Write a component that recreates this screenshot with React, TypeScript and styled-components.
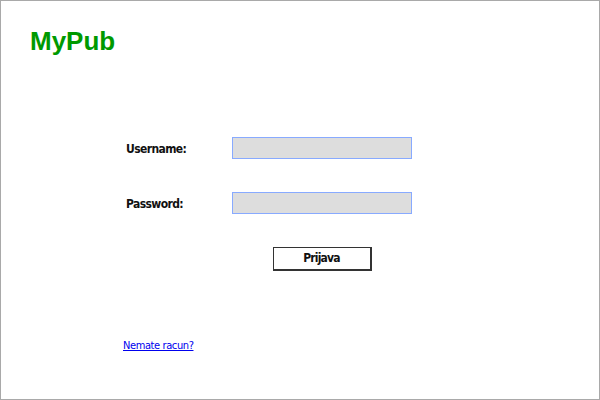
import React from "react";
import styled, { createGlobalStyle } from "styled-components";

const GlobalStyle = createGlobalStyle`
  html, body {
    margin: 0;
    padding: 0;
    background: #fff;
  }
`;

const Frame = styled.div`
  box-sizing: border-box;
  width: 600px;
  height: 400px;
  border: 1px solid #a9a9a9;
  display: flex;
  flex-direction: column;
  background: #fff;
`;

const Logo = styled.h1`
  margin: 25px 0 0 29px;
  font-family: "Liberation Sans", Arial, sans-serif;
  font-size: 26px;
  line-height: 30px;
  font-weight: bold;
  color: #009900;
`;

const Form = styled.form`
  display: grid;
  grid-template-columns: 106px 180px;
  grid-auto-rows: 22px;
  row-gap: 33px;
  align-items: center;
  margin: 81px 0 0 125px;
`;

const Label = styled.label`
  padding-top: 2px;
  font-family: "DejaVu Sans Condensed", "DejaVu Sans", sans-serif;
  font-size: 12px;
  letter-spacing: -0.6px;
  font-weight: bold;
  color: #111;
`;

const Field = styled.input`
  box-sizing: border-box;
  width: 180px;
  height: 22px;
  margin: 0;
  background: #dddddd;
  border: 1px solid #88aaff;
  outline: none;
`;

const Button = styled.button`
  grid-column: 2;
  justify-self: center;
  box-sizing: border-box;
  width: 99px;
  height: 24px;
  margin: 1px 0 0;
  padding: 0;
  background: #fff;
  border: 1px solid #333;
  border-right-width: 2px;
  border-bottom-width: 2px;
  font-family: "DejaVu Sans Condensed", "DejaVu Sans", sans-serif;
  font-size: 12px;
  letter-spacing: -0.8px;
  font-weight: bold;
  color: #111;
`;

const Link = styled.a`
  align-self: flex-start;
  margin: 70px 0 0 122px;
  font-family: "DejaVu Sans Condensed", "DejaVu Sans", sans-serif;
  font-size: 11px;
  letter-spacing: -0.4px;
  color: #0000ee;
  text-decoration: underline;
`;

export default function App() {
  return (
    <>
      <GlobalStyle />
      <Frame>
        <Logo>MyPub</Logo>
        <Form onSubmit={e => e.preventDefault()}>
          <Label htmlFor="username">Username:</Label>
          <Field id="username" type="text" />
          <Label htmlFor="password">Password:</Label>
          <Field id="password" type="password" />
          <Button type="submit">Prijava</Button>
        </Form>
        <Link href="#">Nemate racun?</Link>
      </Frame>
    </>
  );
}
